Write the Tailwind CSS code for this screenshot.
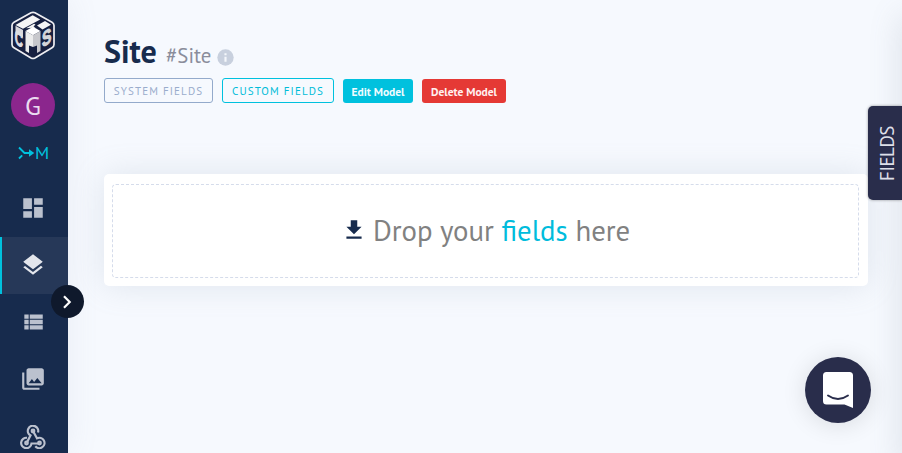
<!DOCTYPE html>
<html lang="en">
<head>
<meta charset="utf-8">
<title>Site</title>
<script src="https://cdn.jsdelivr.net/npm/@tailwindcss/browser@4"></script>
</head>
<body class="flex h-[453px] w-[902px] overflow-hidden bg-[#f6f9fe] font-['PT_Sans','Noto_Sans',sans-serif]">
<aside class="relative z-10 h-[453px] w-[68px] shrink-0 bg-[#172b4d] shadow-[0_0_32px_rgba(136,152,170,.12)]">
  <nav class="flex h-[453px] flex-col overflow-hidden text-[#bbc1ce]">
    <div class="flex h-[83px] shrink-0 items-start pt-[11px] pl-[10px]">
      <svg class="h-[49px] w-[46px]" viewBox="0 0 46 49">
        <path d="M21 1.800q2-1 4 0L42 11.200q2 1.200 2 3.300v19q0 2.100-2 3.300L25 47q-2 1-4 0L4 36.800q-2-1.200-2-3.300v-19q0-2.100 2-3.300z" fill="#172040" stroke="#eeeef2" stroke-width="1.700"/>
        <path d="M5.500 14L22.700 4.200l7.500 4.200L13 17.800z" fill="#f5f5f5"/>
        <path d="M27 14.500l8-4.600 6 3.900-8.500 4.700z M16 17.200l8-4.500 1.500.9-2 1.800 2 1.200z" fill="#f5f5f5"/>
        <path d="M15.500 20l7.500-4.300 7.500 4.300-7.500 4.300z" fill="#fff"/>
        <path d="M5.500 14.800l7.500 4.200v7.500L5.500 22.500z" fill="#d8d8dc"/>
        <path d="M15.500 20l7.500 4.300V36l-4-1.500V42l-3.500-2z" fill="#ececec"/>
        <path d="M23 24.300l7.500-4.300V40L27 42v-7.500L23 36z" fill="#c8c8cc"/>
        <text transform="matrix(.56 .36 0 1 4.700 32)" fill="#dedee2" stroke="#dedee2" stroke-width="1.100" font-size="20" font-weight="700" font-family="Liberation Sans">C</text>
        <text transform="matrix(.67 -.4 0 1 32 36.500)" fill="#d5d5da" stroke="#d5d5da" stroke-width="1.100" font-size="21" font-weight="700" font-family="Liberation Sans">S</text>
      </svg>
    </div>
    <div class="ml-[11px] flex size-11 shrink-0 items-center justify-center rounded-full bg-[#8b268d] pt-px text-[26px] leading-none text-[#eadcf0]">G</div>
    <div class="flex h-[52px] shrink-0 items-center pl-[18px] text-[#00c1de]">
      <svg class="h-[14px] w-[17px]" viewBox="0 0 17 14" fill="none" stroke="currentColor" stroke-width="1.900"><path d="M1 1.500L6.500 7H14M1 12.500l3.200-3.200"/><path d="M11 3.200v7.600L16.300 7z" fill="currentColor" stroke="none"/></svg>
      <span class="text-[18px] leading-none">M</span>
    </div>
    <div class="flex h-[58px] shrink-0 items-center pl-5 pb-px"><svg class="size-[26px]" viewBox="0 0 24 24" fill="currentColor"><path d="M3 13h8V3H3v10zm0 8h8v-6H3v6zm10 0h8V11h-8v10zm0-18v6h8V3h-8z"/></svg></div>
    <div class="flex h-[57px] shrink-0 items-center border-l-2 border-[#00c1de] bg-[#263858] pb-0.5 pl-[18px] text-[#e3e6ec]"><svg class="size-[26px]" viewBox="0 0 24 24" fill="currentColor"><path d="M11.990 18.540l-7.370-5.730L3 14.070l9 7 9-7-1.630-1.270-7.380 5.740zM12 16l7.360-5.730L21 9l-9-7-9 7 1.630 1.270L12 16z"/></svg></div>
    <div class="flex h-[57px] shrink-0 items-center pl-5 pb-px"><svg class="size-[26px]" viewBox="0 0 24 24" fill="currentColor"><path d="M4 14h4v-4H4v4zm0 5h4v-4H4v4zM4 9h4V5H4v4zm5 5h12v-4H9v4zm0 5h12v-4H9v4zM9 5v4h12V5H9z"/></svg></div>
    <div class="flex h-[57px] shrink-0 items-center pl-5 pb-px"><svg class="size-[26px]" viewBox="0 0 24 24" fill="currentColor"><path d="M22 16V4c0-1.100-.9-2-2-2H8c-1.100 0-2 .9-2 2v12c0 1.100.9 2 2 2h12c1.100 0 2-.9 2-2zm-11-4l2.030 2.710L16 11l4 5H8l3-4zM2 6v14c0 1.100.9 2 2 2h14v-2H4V6H2z"/></svg></div>
    <div class="flex h-[57px] shrink-0 items-center pl-5"><svg class="h-[24px] w-[26px]" viewBox="0 0 26 24" fill="none" stroke="currentColor" stroke-width="2.200"><path d="M18 7.500A5.200 5.200 0 1 0 10.500 10.500L7 17.300M7 12.800a5.200 5.200 0 1 0 4.500 5.700H19M13 6l4 7.300a5.200 5.200 0 1 1-1.700 8"/><circle cx="13" cy="6" r="1.300"/><circle cx="6.500" cy="18" r="1.300"/><circle cx="19.500" cy="18" r="1.300"/></svg></div>
  </nav>
  <button class="absolute top-[285px] left-[51px] flex size-[33px] items-center justify-center rounded-full bg-[#0f192c]"><svg class="mr-0.5 size-[14px]" viewBox="0 0 14 14" fill="none" stroke="#fff" stroke-width="2.200"><path d="M4 1.300L9.700 7 4 12.700"/></svg></button>
</aside>
<main class="w-[800px] shrink-0 pt-[33px] pl-9">
  <header class="flex h-[45px] items-start">
    <h1 class="w-[62px] text-[32px] leading-[36px] font-bold whitespace-nowrap text-[#172b4d]">Site</h1>
    <span class="mt-[10px] w-[51px] text-[20.800px] leading-[26px] whitespace-nowrap text-[#8a8d9b]">#Site</span>
    <svg class="mt-4 size-[17px]" viewBox="0 0 16 16"><circle cx="8" cy="8" r="7.700" fill="#c8d0de"/><path d="M8 4v1.800M8 7.200v4.800" stroke="#f4f7fb" stroke-width="2"/></svg>
  </header>
  <div class="flex items-start text-[11px] leading-none whitespace-nowrap">
    <button class="h-[25px] w-[109px] rounded-[3px] border border-[#93aacb] pt-px tracking-[1.100px] text-[#9aaccc]">SYSTEM FIELDS</button>
    <button class="ml-[9px] h-[25px] w-[112px] rounded-[3px] border border-[#00c1de] pt-px tracking-[1.100px] text-[#00bcd8]">CUSTOM FIELDS</button>
    <button class="mt-px ml-[9px] h-6 w-[70px] rounded-[3px] bg-[#00c1de] pt-0.5 text-[11.500px] font-bold text-[#effcff]">Edit Model</button>
    <button class="mt-px ml-[9px] h-6 w-[84px] rounded-[3px] bg-[#e53935] pt-0.5 text-[11.500px] font-bold text-[#fff0f0]">Delete Model</button>
  </div>
  <section class="mt-[71px] h-[112px] rounded-[5px] bg-white px-2 pt-[10px] shadow-[0_0_32px_rgba(136,152,170,.2)]">
    <div class="flex h-[94px] w-[747px] items-center rounded-[4px] border border-dashed border-[#d5dceb] pl-[228px]">
      <svg class="mb-0.5 size-[26px]" viewBox="0 0 24 24" fill="#172b4d"><path d="M19 9h-4V3H9v6H5l7 7 7-7zM5 18v2h14v-2H5z"/></svg>
      <p class="ml-[6px] text-[28.800px] leading-none whitespace-nowrap text-[#818181]">Drop your <span class="text-[#00bcdc]">fields</span> here</p>
    </div>
  </section>
</main>
<div class="absolute top-[16px] left-[902px] h-[453px] w-5 shadow-[0_0_32px_rgba(100,115,130,.22)]"></div>
<button class="absolute top-[106px] left-[868px] z-20 flex h-[94px] w-[34px] items-center justify-center rounded-l-[5px] bg-[#292d4b] shadow-[0_0_3px_rgba(0,0,0,.4)]"><span class="translate-x-[2px] -rotate-90 text-[19px] leading-none tracking-[-0.5px] whitespace-nowrap text-[#dddfe8]">FIELDS</span></button>
<button class="absolute top-[357px] left-[805px] z-20 size-[66px] rounded-full bg-[#292d4b] shadow-[0_2px_24px_rgba(0,0,0,.12)]"><svg class="size-[66px]" viewBox="0 0 66 66"><path d="M21.500 15h23q3.500 0 3.500 3.500V51l-8.500-3.500h-18q-3.500 0-3.500-3.500V18.500q0-3.500 3.500-3.500z" fill="#fff"/><path d="M23 38.500q10 7 20 0" fill="none" stroke="#292d4b" stroke-width="1.900" stroke-linecap="round"/></svg></button>
</body>
</html>
